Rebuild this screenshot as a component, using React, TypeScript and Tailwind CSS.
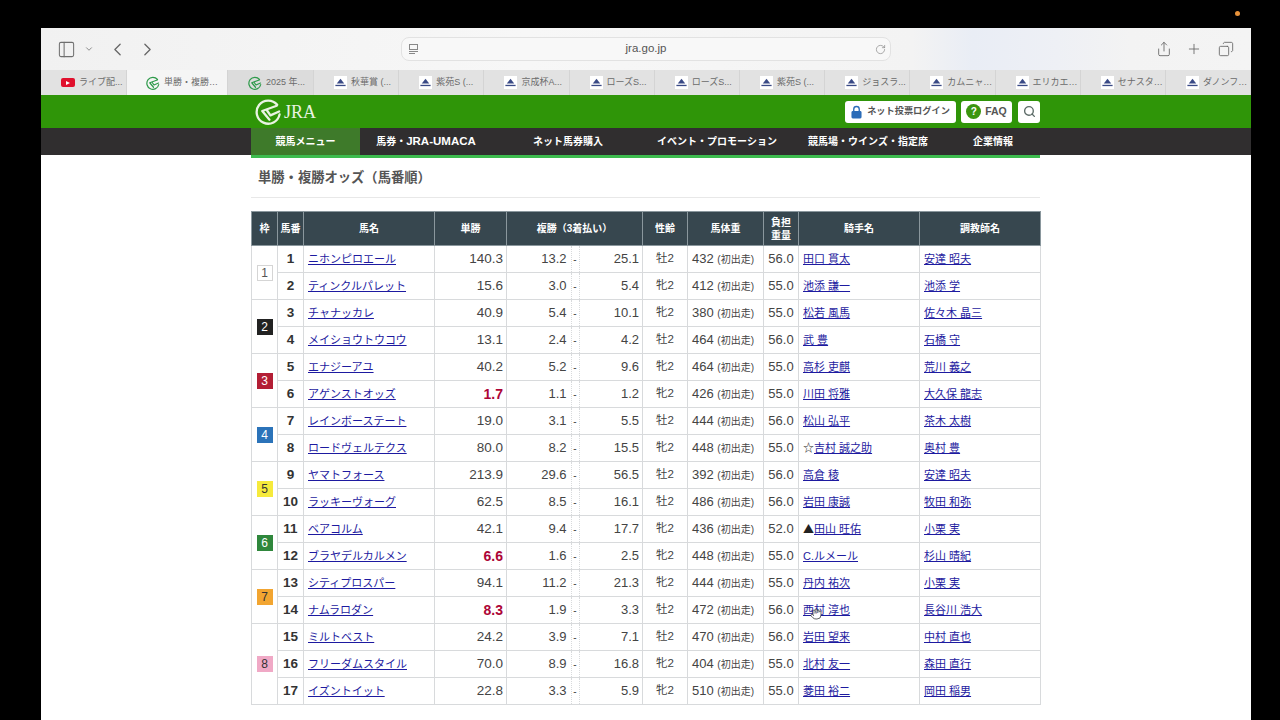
import { ChevronDown, ChevronLeft, ChevronRight, Copy, Hand, PanelLeft, Plus, RotateCw, Search, Share } from 'lucide-react'

const font = 'font-["Liberation_Sans","Noto_Sans_CJK_JP",sans-serif]'

const tabs = ['秋華賞 (...', '紫苑S (...', '京成杯A...', 'ローズS...', 'ローズS...', '紫苑S (...', 'ジョスラ...', 'カムニャ…', 'エリカエ…', 'セナスタ…', 'ダノンフ…']

const nav = [
  { label: '競馬メニュー', width: 'w-[109px]', active: true },
  { label: '馬券・', latin: 'JRA-UMACA', width: 'w-[132px]' },
  { label: 'ネット馬券購入', width: 'w-[152px]' },
  { label: 'イベント・プロモーション', width: 'w-[146px]' },
  { label: '競馬場・ウインズ・指定席', width: 'w-[156px]' },
  { label: '企業情報', width: 'w-[94px]' },
]

const waku = [
  { n: 1, span: 2, box: 'border border-[#d5d5d5] bg-white text-[#555]' },
  { n: 2, span: 2, box: 'bg-[#222222] text-white' },
  { n: 3, span: 2, box: 'bg-[#b31e35] text-white' },
  { n: 4, span: 2, box: 'bg-[#2b73b9] text-white' },
  { n: 5, span: 2, box: 'bg-[#f6ea3c] text-[#333]' },
  { n: 6, span: 2, box: 'bg-[#2f873c] text-white' },
  { n: 7, span: 2, box: 'bg-[#f2a531] text-[#333]' },
  { n: 8, span: 3, box: 'bg-[#f0a9c6] text-[#333]' },
]

const horses = [
  ['ニホンピロエール', '140.3', '13.2', '25.1', '牡2', '432', '56.0', '', '田口 貫太', '安達 昭夫'],
  ['ティンクルパレット', '15.6', '3.0', '5.4', '牝2', '412', '55.0', '', '池添 謙一', '池添 学'],
  ['チャナッカレ', '40.9', '5.4', '10.1', '牝2', '380', '55.0', '', '松若 風馬', '佐々木 晶三'],
  ['メイショウトウコウ', '13.1', '2.4', '4.2', '牡2', '464', '56.0', '', '武 豊', '石橋 守'],
  ['エナジーアユ', '40.2', '5.2', '9.6', '牝2', '464', '55.0', '', '高杉 吏麒', '荒川 義之'],
  ['アゲンストオッズ', '1.7', '1.1', '1.2', '牝2', '426', '55.0', '', '川田 将雅', '大久保 龍志'],
  ['レインボーステート', '19.0', '3.1', '5.5', '牡2', '444', '56.0', '', '松山 弘平', '茶木 太樹'],
  ['ロードヴェルテクス', '80.0', '8.2', '15.5', '牝2', '448', '55.0', '☆', '吉村 誠之助', '奥村 豊'],
  ['ヤマトフォース', '213.9', '29.6', '56.5', '牡2', '392', '56.0', '', '高倉 稜', '安達 昭夫'],
  ['ラッキーヴォーグ', '62.5', '8.5', '16.1', '牡2', '486', '56.0', '', '岩田 康誠', '牧田 和弥'],
  ['ベアコルム', '42.1', '9.4', '17.7', '牝2', '436', '52.0', '▲', '田山 旺佑', '小栗 実'],
  ['ブラヤデルカルメン', '6.6', '1.6', '2.5', '牝2', '448', '55.0', '', 'C.ルメール', '杉山 晴紀'],
  ['シティプロスパー', '94.1', '11.2', '21.3', '牝2', '444', '55.0', '', '丹内 祐次', '小栗 実'],
  ['ナムラロダン', '8.3', '1.9', '3.3', '牡2', '472', '56.0', '', '西村 淳也', '長谷川 浩大'],
  ['ミルトベスト', '24.2', '3.9', '7.1', '牡2', '470', '56.0', '', '岩田 望来', '中村 直也'],
  ['フリーダムスタイル', '70.0', '8.9', '16.8', '牝2', '404', '55.0', '', '北村 友一', '森田 直行'],
  ['イズントイット', '22.8', '3.3', '5.9', '牝2', '510', '55.0', '', '菱田 裕二', '岡田 稲男'],
]

function wakuFor(index: number) {
  let start = 0
  for (const w of waku) {
    if (index === start) return w
    start += w.span
  }
  return null
}

function JraMark({ className }: { className: string }) {
  return (
    <svg viewBox="0 0 28 28" fill="none" stroke="currentColor" strokeWidth="2.4" strokeLinecap="round" strokeLinejoin="round" className={className}>
      <path d="M23 7A12 12 0 1 0 25.5 17" />
      <path d="M22.5 8 7.5 13.5 15 22.5" />
      <path d="M12.5 13l3.5 5 9-4" />
    </svg>
  )
}

function RaceTabIcon() {
  return (
    <svg viewBox="0 0 14 14" className="size-[13px] shrink-0 bg-white">
      <path d="M7 3 11 8H3Z" fill="#3a4a86" />
      <rect x="1.5" y="9.5" width="11" height="1.4" fill="#3a4a86" />
    </svg>
  )
}

function Tab({ icon, label, className }: { icon: React.ReactNode; label: string; className: string }) {
  return (
    <div className={`flex h-full items-center gap-[4px] overflow-hidden border-r border-[#d4d4d4] text-[9px] text-[#6a6a6a] ${className}`}>
      {icon}
      <span className="whitespace-nowrap">{label}</span>
    </div>
  )
}

export default function App() {
  return (
    <div className={`relative h-[720px] w-[1280px] overflow-hidden bg-black pl-[41px] pr-[29px] pt-[28px] ${font}`}>
      <span className="absolute left-[1235px] top-[11px] size-[5px] rounded-full bg-[#e8923a]" />

      <div className="h-[692px] overflow-hidden bg-white">
        {/* safari toolbar */}
        <div className="flex h-[42px] items-center bg-[linear-gradient(90deg,#f1f1f1_0%,#f7f7f7_40%,#f3f3f3_72%,#e9edf5_77%,#eef0f5_84%,#f3f3f3_90%,#f4f4f4_100%)]">
          <PanelLeft className="ml-[16px] size-[19px] text-[#6f6f6f]" strokeWidth={1.3} />
          <ChevronDown className="ml-[8px] size-[10px] text-[#777]" strokeWidth={2} />
          <ChevronLeft className="ml-[13px] size-[21px] text-[#666]" strokeWidth={1.5} />
          <ChevronRight className="ml-[9px] size-[21px] text-[#666]" strokeWidth={1.5} />
          <div className="relative ml-[243px] flex h-[24px] w-[490px] items-center justify-center rounded-lg border border-[#e2e2e2] bg-[#f8f8f8] text-[11.5px] text-[#555]">
            <span className="absolute left-[7px] flex flex-col gap-[1px]">
              <span className="h-[6px] w-[9px] border border-[#888]" />
              <span className="h-px w-[9px] bg-[#888]" />
              <span className="h-px w-[6px] bg-[#888]" />
            </span>
            jra.go.jp
            <RotateCw className="absolute right-[4px] size-[11px] text-[#888]" strokeWidth={1.5} />
          </div>
          <Share className="ml-[265px] size-[16px] text-[#666]" strokeWidth={1.3} />
          <Plus className="ml-[14px] size-[16px] text-[#666]" strokeWidth={1.3} />
          <Copy className="ml-[16px] size-[16px] scale-x-[-1] text-[#666]" strokeWidth={1.3} />
        </div>

        {/* tabs */}
        <div className="flex h-[25px] bg-[#e2e2e2]">
          <Tab
            className="w-[86px] pl-[20px]"
            label="ライブ配..."
            icon={
              <span className="flex h-[9px] w-[14px] items-center justify-center rounded-[2px] bg-[#e0102d]">
                <span className="border-y-[2.5px] border-l-[4px] border-y-transparent border-l-white" />
              </span>
            }
          />
          <Tab className="w-[101px] bg-[#f5f5f5] pl-[19px]" label="単勝・複勝…" icon={<JraMark className="size-[14px] text-[#2e9a4a]" />} />
          <Tab className="w-[86px] bg-[#dcdcdc] pl-[20px]" label="2025 年..." icon={<JraMark className="size-[14px] text-[#2e9a4a]" />} />
          {tabs.map((label, i) => (
            <Tab key={i} className="flex-1 pl-[20px]" label={label} icon={<RaceTabIcon />} />
          ))}
        </div>

        {/* green header */}
        <div className="h-[33px] bg-[#2f9508]">
          <div className="ml-[210px] flex h-full w-[789px] items-center pl-[4px]">
            <JraMark className="size-[27px] text-[#e9f3e2]" />
            <span className='ml-[2px] font-["Liberation_Serif",serif] text-[18px] leading-none text-[#e9f3e2]'>JRA</span>
            <div className="ml-auto flex items-center">
              <div className="flex h-[22px] w-[111px] items-center justify-center gap-[5px] rounded-[3px] bg-white text-[9.2px] font-bold text-[#555]">
                <svg viewBox="0 0 12 15" className="h-[14px] w-[11px]">
                  <path d="M3 7V4.5a3 3 0 0 1 6 0V7" fill="none" stroke="#2b6cb8" strokeWidth="1.5" />
                  <rect x="0.5" y="6.5" width="11" height="8" rx="1.5" fill="#2b6cb8" />
                </svg>
                ネット投票ログイン
              </div>
              <div className="ml-[5px] flex h-[22px] w-[51px] items-center justify-center gap-[4px] rounded-[3px] bg-white text-[10.5px] font-bold text-[#555]">
                <span className="flex size-[15px] items-center justify-center rounded-full bg-[#3b950f] text-[10px] text-white">?</span>
                FAQ
              </div>
              <div className="ml-[6px] flex size-[22px] items-center justify-center rounded-[3px] bg-white">
                <Search className="size-[13px] text-[#5b6a66]" strokeWidth={2.5} />
              </div>
            </div>
          </div>
        </div>

        {/* nav */}
        <div className="h-[27px] bg-[#302e2f]">
          <div className="ml-[210px] flex h-full w-[789px]">
            {nav.map((item) => (
              <div
                key={item.label}
                className={`flex items-center justify-center text-[10px] font-bold text-white ${item.width} ${item.active ? 'bg-[#3e7a2a] text-[#dfe9da]' : ''}`}
              >
                {item.label}
                {item.latin && <span className="text-[11.5px]">{item.latin}</span>}
              </div>
            ))}
          </div>
        </div>

        {/* content */}
        <div className="ml-[210px] w-[789px]">
          <div className="h-[3px] bg-[#3dbb4e]" />
          <h1 className="flex h-[40px] items-center border-b border-[#e8e8e8] pl-[7px] text-[13.3px] font-bold text-[#555]">単勝・複勝オッズ（馬番順）</h1>

          <table className="mt-[13px] w-[789px] table-fixed border-collapse">
            <colgroup>
              <col className="w-[26px]" />
              <col className="w-[26px]" />
              <col className="w-[131px]" />
              <col className="w-[72px]" />
              <col className="w-[64px]" />
              <col className="w-[9px]" />
              <col className="w-[63px]" />
              <col className="w-[45px]" />
              <col className="w-[76px]" />
              <col className="w-[35px]" />
              <col className="w-[121px]" />
              <col className="w-[121px]" />
            </colgroup>
            <thead>
              <tr className="h-[34px] bg-[#37474f] text-[10px] font-bold leading-[13px] text-white [&>th]:border [&>th]:border-[#8a979d]">
                <th>枠</th>
                <th>馬番</th>
                <th>馬名</th>
                <th>単勝</th>
                <th colSpan={3}>複勝（3着払い）</th>
                <th>性齢</th>
                <th>馬体重</th>
                <th>負担<br />重量</th>
                <th>騎手名</th>
                <th>調教師名</th>
              </tr>
            </thead>
            <tbody>
              {horses.map((h, i) => {
                const w = wakuFor(i)
                const popular = h[1] === '1.7' || h[1] === '6.6' || h[1] === '8.3'
                return (
                  <tr key={h[0]} className="h-[27px] text-[13px] text-[#444] [&>td]:border [&>td]:border-[#d8dadc]">
                    {w && (
                      <td rowSpan={w.span} className="p-0">
                        <span className={`mx-auto flex size-[16px] items-center justify-center text-[12px] ${w.box}`}>{w.n}</span>
                      </td>
                    )}
                    <td className="p-0 text-center text-[13.5px] font-bold text-[#333]">{i + 1}</td>
                    <td className="truncate pl-[4px] text-[11px]">
                      <a href="#" className="text-[#1d1aa0] underline">{h[0]}</a>
                    </td>
                    <td className={`pr-[3px] text-right ${popular ? 'text-[14px] font-bold text-[#ad0537]' : 'text-[13.5px]'}`}>{h[1]}</td>
                    <td className="!border-r-0 pr-[4px] text-right">{h[2]}</td>
                    <td className="!border-x-0 p-0 text-center text-[10px]">
                      <span className="flex h-[26px] items-center justify-center border-x border-dotted border-[#d8dadc]">-</span>
                    </td>
                    <td className="!border-l-0 pr-[3px] text-right">{h[3]}</td>
                    <td className="p-0 text-center text-[11.5px]">{h[4]}</td>
                    <td className="pl-[4px]">
                      {h[5]} <span className="text-[10px]">(初出走)</span>
                    </td>
                    <td className="p-0 text-center">{h[6]}</td>
                    <td className="pl-[4px] text-[11px]">
                      {h[7] && <span className='font-["Noto_Sans_CJK_JP",sans-serif] text-[#222]'>{h[7]}</span>}
                      <a href="#" className="text-[#1d1aa0] underline">{h[8]}</a>
                    </td>
                    <td className="pl-[4px] text-[11px]">
                      <a href="#" className="text-[#1d1aa0] underline">{h[9]}</a>
                    </td>
                  </tr>
                )
              })}
            </tbody>
          </table>
        </div>
      </div>

      <Hand className="absolute left-[810px] top-[608px] size-[12px] fill-white text-[#333]" strokeWidth={1.5} />
    </div>
  )
}
